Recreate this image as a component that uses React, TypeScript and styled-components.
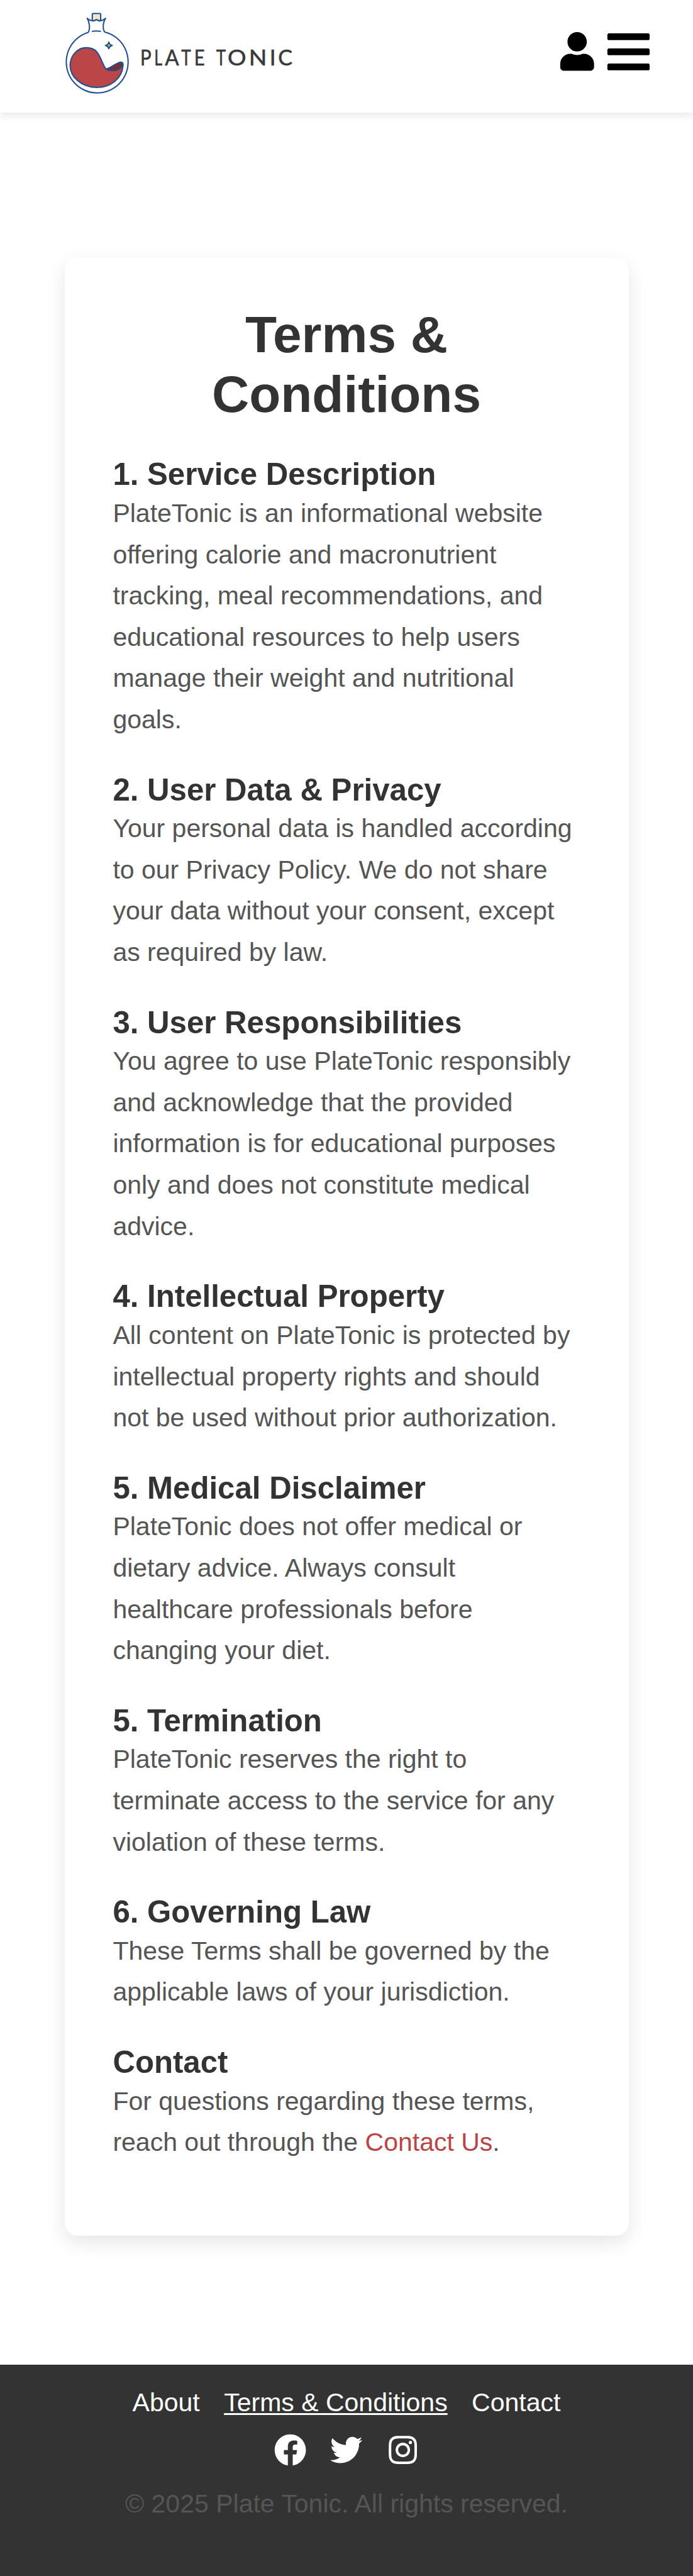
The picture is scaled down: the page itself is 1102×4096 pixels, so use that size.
import React from "react";
import styled, { createGlobalStyle } from "styled-components";
import { FaBars, FaFacebook, FaInstagram, FaTwitter, FaUser } from "react-icons/fa";

const UNIT = 1102 / 430;
const u = (n: number) => `${(n * UNIT).toFixed(3)}px`;

const GlobalStyle = createGlobalStyle`
  *, *::before, *::after { box-sizing: border-box; }
  html, body { margin: 0; padding: 0; background: #fff; }
  body { font-family: Arial, "Liberation Sans", sans-serif; font-size: ${u(16)}; color: #555; overflow-x: hidden; }
  h1, h2, p { margin: 0; }
`;

const Page = styled.div`
  display: flex;
  flex-direction: column;
  min-height: 4096px;
`;

const Header = styled.header`
  display: flex;
  justify-content: space-between;
  align-items: flex-start;
  height: ${u(70)};
  padding: 0 ${u(25)} 0 ${u(40)};
  background: #fff;
  box-shadow: 0 ${u(2)} ${u(5)} rgba(0, 0, 0, 0.1);
`;

const Logo = styled.svg`
  display: block;
  width: ${u(160)};
  height: ${u(70)};
  overflow: visible;
`;

const Wordmark = styled.text`
  font-family: Lato, sans-serif;
  font-size: 41px;
  font-weight: 400;
  fill: #3a3a3a;
  stroke: #3a3a3a;
  stroke-width: 0.7px;
`;

const HeaderActions = styled.div`
  display: flex;
  align-items: center;
  gap: ${u(5)};
  height: ${u(64)};
  color: #000;
`;

const Icon = styled.span<{ $size: number }>`
  display: flex;
  font-size: ${(p) => u(p.$size)};
`;

const Main = styled.main`
  flex: 1;
  padding: ${u(90)} ${u(40)} 0;
`;

const Card = styled.article`
  height: ${u(1227)};
  padding: ${u(29.4)} ${u(30)} 0;
  border-radius: ${u(8)};
  background: #fff;
  box-shadow: 0 ${u(4)} ${u(12)} rgba(0, 0, 0, 0.1);
`;

const Title = styled.h1`
  margin-bottom: ${u(20)};
  font-size: ${u(32)};
  line-height: ${u(37)};
  color: #333;
  text-align: center;
`;

const Section = styled.section`
  margin-bottom: ${u(19.5)};
`;

const Heading = styled.h2`
  margin-bottom: ${u(0.5)};
  font-size: ${u(19.2)};
  line-height: ${u(22)};
  color: #333;
`;

const Paragraph = styled.p`
  line-height: ${u(25.6)};
  white-space: nowrap;
`;

const TextLink = styled.a`
  color: #b94547;
  text-decoration: none;
`;

const Footer = styled.footer`
  display: flex;
  flex-direction: column;
  align-items: center;
  height: ${u(131.2)};
  padding-top: ${u(14.4)};
  background: #333;
  color: #fff;
`;

const FooterRow = styled.div<{ $top?: number }>`
  display: flex;
  gap: ${u(15)};
  margin-top: ${(p) => u(p.$top ?? 0)};
  line-height: ${u(18)};
`;

const FooterLink = styled.a<{ $current?: boolean }>`
  color: #fff;
  text-decoration: ${(p) => (p.$current ? "underline" : "none")};
  text-decoration-thickness: ${u(1)};
  text-underline-offset: ${u(1.2)};
  text-decoration-skip-ink: none;
`;

const Copyright = styled.p`
  margin-top: ${u(14.6)};
  line-height: ${u(18)};
  color: #555;
`;

const sections: { title: string; lines: React.ReactNode[] }[] = [
  {
    title: "1. Service Description",
    lines: [
      "PlateTonic is an informational website",
      "offering calorie and macronutrient",
      "tracking, meal recommendations, and",
      "educational resources to help users",
      "manage their weight and nutritional",
      "goals.",
    ],
  },
  {
    title: "2. User Data & Privacy",
    lines: [
      "Your personal data is handled according",
      "to our Privacy Policy. We do not share",
      "your data without your consent, except",
      "as required by law.",
    ],
  },
  {
    title: "3. User Responsibilities",
    lines: [
      "You agree to use PlateTonic responsibly",
      "and acknowledge that the provided",
      "information is for educational purposes",
      "only and does not constitute medical",
      "advice.",
    ],
  },
  {
    title: "4. Intellectual Property",
    lines: [
      "All content on PlateTonic is protected by",
      "intellectual property rights and should",
      "not be used without prior authorization.",
    ],
  },
  {
    title: "5. Medical Disclaimer",
    lines: [
      "PlateTonic does not offer medical or",
      "dietary advice. Always consult",
      "healthcare professionals before",
      "changing your diet.",
    ],
  },
  {
    title: "5. Termination",
    lines: [
      "PlateTonic reserves the right to",
      "terminate access to the service for any",
      "violation of these terms.",
    ],
  },
  {
    title: "6. Governing Law",
    lines: ["These Terms shall be governed by the", "applicable laws of your jurisdiction."],
  },
  {
    title: "Contact",
    lines: [
      "For questions regarding these terms,",
      <>
        reach out through the <TextLink>Contact Us</TextLink>.
      </>,
    ],
  },
];

// Each wordmark letter with its left edge and the width it is set to.
const letters: [string, number, number][] = [
  ["P", 260.5, 20.7],
  ["L", 286.6, 15],
  ["A", 306.5, 26.2],
  ["T", 336.9, 18],
  ["E", 360.8, 19.7],
  ["T", 401.9, 18],
  ["O", 423.1, 34.5],
  ["N", 462.6, 33.5],
  ["I", 501.2, 11.5],
  ["C", 517.2, 26.6],
];

function BrandLogo() {
  return (
    <Logo viewBox="120 0 480 210" role="img" aria-label="Plate Tonic">
      <g stroke="#214f91" strokeLinecap="round" strokeLinejoin="round" strokeWidth="2.4" fill="none">
        <path d="M163.8 60.2A57.6 57.6 0 1 0 194.8 59.6Q193.500 59.500 193.200 58C190 51 191.500 41 196 34C191.500 38 187 39.300 183 38.600Q181.200 38 180.400 36.900Q179 35.900 177.600 36.900Q176.600 38 174.500 38.600C170 39.300 166 38 161.700 34C165.800 41 167.800 52 163.800 60.200Z" />
        <path d="M171.200 38V26.800Q171.200 25.200 172.800 25.200H185.200Q186.800 25.200 186.800 26.800V38Q183 39.300 180.400 36.900Q179 35.900 177.600 36.900Q175 39.300 171.200 38Z" fill="#f2e6cb" />
        <path d="M171.500 58.3Q179 57 186.300 58.300" />
        <path d="M130 122C130 105 142 89 160 88.800C170 88.800 175 91 179.500 96.500C188 107 190.500 121 196.500 128.200C205 128 216 115.800 225 115.800Q229.500 116.500 228.300 123C226 147 205 162.700 180 162.700C152 162.700 130 144 130 122Z" fill="#bb4648" />
        <path d="M197 129C207 126.500 216 115.800 225 115.800C230.500 117 227.500 124.500 222 128C216 132.500 204 132.500 197 129Z" fill="#7b2c30" />
        <path d="M202 78.300Q203.200 83.100 208.300 84.500Q203.200 85.900 202 90.700Q200.800 85.900 195.700 84.500Q200.800 83.100 202 78.300Z" fill="#9dbb4f" />
      </g>
      <Wordmark y="122.2">
        {letters.map(([char, x, width], i) => (
          <tspan key={i} x={x} textLength={width} lengthAdjust="spacingAndGlyphs">
            {char}
          </tspan>
        ))}
      </Wordmark>
    </Logo>
  );
}

export default function App() {
  return (
    <Page>
      <GlobalStyle />
      <Header>
        <BrandLogo />
        <HeaderActions>
          <Icon $size={24}><FaUser /></Icon>
          <Icon $size={30}><FaBars /></Icon>
        </HeaderActions>
      </Header>
      <Main>
        <Card>
          <Title>Terms &amp;<br />Conditions</Title>
          {sections.map((s) => (
            <Section key={s.title}>
              <Heading>{s.title}</Heading>
              <Paragraph>
                {s.lines.map((line, i) => (
                  <React.Fragment key={i}>
                    {i > 0 && <br />}
                    {line}
                  </React.Fragment>
                ))}
              </Paragraph>
            </Section>
          ))}
        </Card>
      </Main>
      <Footer>
        <FooterRow>
          <FooterLink>About</FooterLink>
          <FooterLink $current>Terms &amp; Conditions</FooterLink>
          <FooterLink>Contact</FooterLink>
        </FooterRow>
        <FooterRow $top={10.5}>
          <Icon $size={20}><FaFacebook /></Icon>
          <Icon $size={20}><FaTwitter /></Icon>
          <Icon $size={20}><FaInstagram /></Icon>
        </FooterRow>
        <Copyright>© 2025 Plate Tonic. All rights reserved.</Copyright>
      </Footer>
    </Page>
  );
}
